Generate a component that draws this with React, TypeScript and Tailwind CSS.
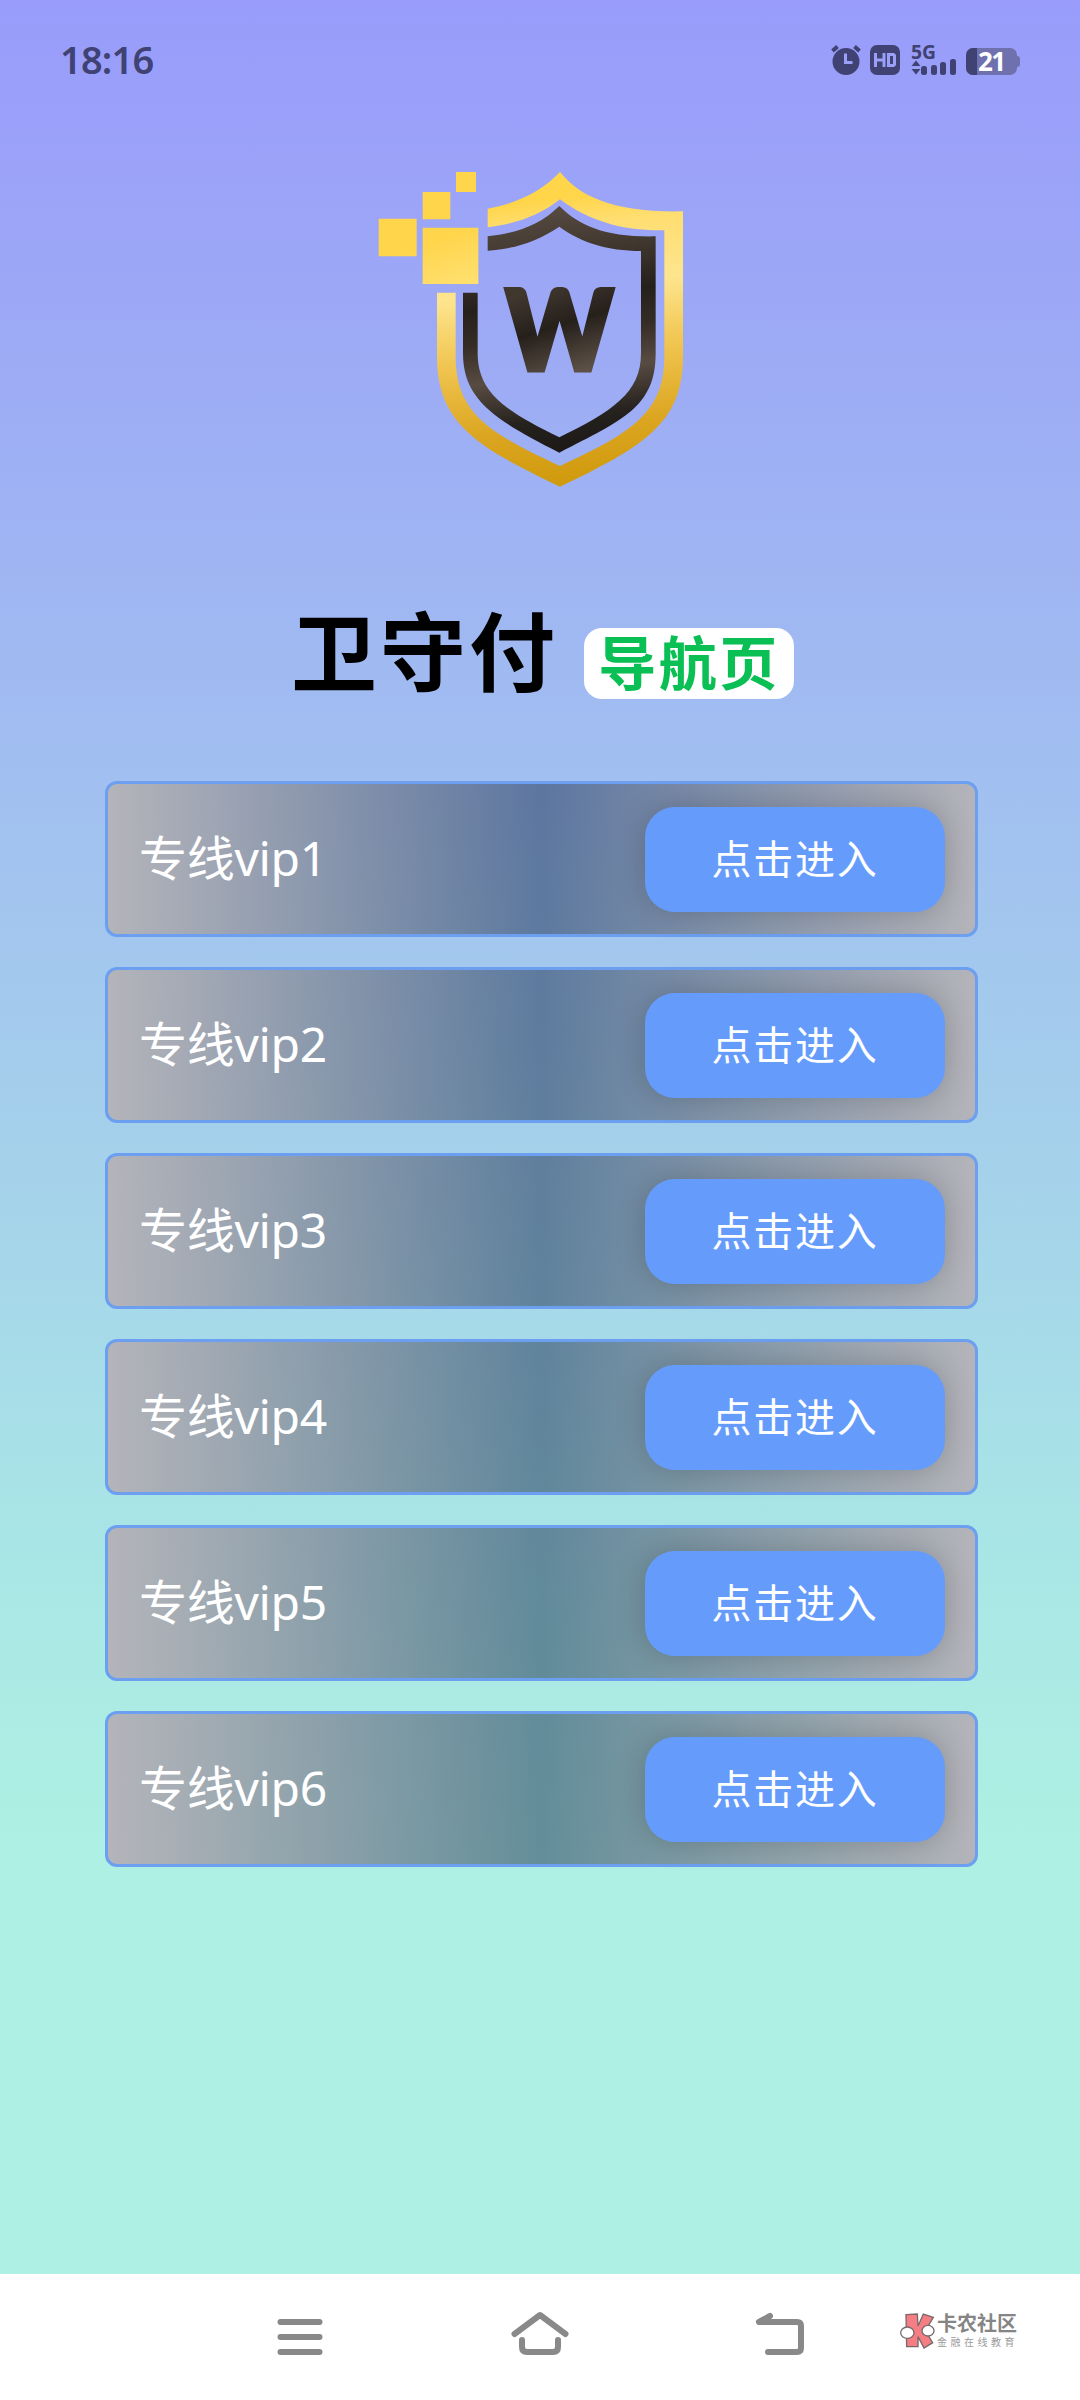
import * as React from 'react';

// ── Data ──────────────────────────────────────────────────────────────────────
const LINES = ['专线vip1', '专线vip2', '专线vip3', '专线vip4', '专线vip5', '专线vip6'];

// ── Status bar ────────────────────────────────────────────────────────────────
function StatusIcons() {
  return (
    <svg width="190" height="44" viewBox="830 38 190 44" fill="#3f4273">
      {/* alarm */}
      <circle cx="846" cy="61.500" r="13.500" />
      <path d="M832.500 51l5-4.500M859.500 51l-5-4.500" stroke="#3f4273" strokeWidth="4" />
      <path d="M845.500 53.500v9h7" fill="none" stroke="#9a9ff8" strokeWidth="3" />
      {/* HD */}
      <rect x="870" y="45" width="30" height="30" rx="7" />
      <path
        d="M875.500 53v14M884 53v14M875 60h9M888.500 54.500h5l1 1v9l-1 1h-5z"
        fill="none"
        stroke="#9a9ff8"
        strokeWidth="3"
      />
      {/* 5G + signal */}
      <text x="911" y="58.500" fontFamily="'Noto Sans', sans-serif" fontWeight="700" fontSize="19" textLength="25" lengthAdjust="spacingAndGlyphs">
        5G
      </text>
      <path d="M911.500 66l4.500-5.500 4.500 5.500zM911.500 69l4.500 5.500 4.500-5.500z" />
      <rect x="921" y="66" width="6" height="9" rx="2.500" />
      <rect x="931" y="65" width="6" height="10" rx="2.500" />
      <rect x="940" y="62" width="6" height="13" rx="2.500" />
      <rect x="950" y="59" width="6" height="16" rx="2.500" />
      {/* battery */}
      <rect x="966" y="48" width="51" height="27" rx="7" fill="#6e71ae" />
      <path d="M973 48h4v27h-4a7 7 0 0 1-7-7v-13a7 7 0 0 1 7-7z" />
      <path d="M1017 56a3 3 0 0 1 3 3v5a3 3 0 0 1-3 3z" fill="#6e71ae" />
      <text x="978" y="71" fontFamily="'Noto Sans', sans-serif" fontWeight="700" fontSize="26" fill="#fff" textLength="28">
        21
      </text>
    </svg>
  );
}

function StatusBar() {
  return (
    <header className="flex h-[120px] items-center justify-between pr-[60px] pl-[60px]">
      <span className="mb-[2px] font-['Noto_Sans'] text-[38px] leading-none font-semibold tracking-[-0.8px] text-[#3f4273]">
        18:16
      </span>
      <StatusIcons />
    </header>
  );
}

// ── Logo ──────────────────────────────────────────────────────────────────────
function Logo() {
  return (
    <svg width="340" height="350" viewBox="0 0 1020 1050">
      <defs>
        <linearGradient id="gold" gradientUnits="userSpaceOnUse" x1="500" y1="60" x2="600" y2="1010">
          <stop offset="0.100" stopColor="#ffd54a" />
          <stop offset="0.180" stopColor="#ffde70" />
          <stop offset="0.380" stopColor="#fde58e" />
          <stop offset="0.580" stopColor="#f1c652" />
          <stop offset="0.820" stopColor="#dba520" />
          <stop offset="1" stopColor="#cf9a0c" />
        </linearGradient>
        <linearGradient id="pixels" gradientUnits="userSpaceOnUse" x1="180" y1="60" x2="300" y2="402">
          <stop offset="0.600" stopColor="#ffd54c" />
          <stop offset="1" stopColor="#ffdf6e" />
        </linearGradient>
        <linearGradient id="dark" gradientUnits="userSpaceOnUse" x1="520" y1="170" x2="620" y2="910">
          <stop offset="0" stopColor="#584c42" />
          <stop offset="0.200" stopColor="#40372f" />
          <stop offset="0.380" stopColor="#26201b" />
          <stop offset="0.520" stopColor="#352c26" />
          <stop offset="0.680" stopColor="#584c42" />
          <stop offset="0.860" stopColor="#25211d" />
          <stop offset="1" stopColor="#1b1816" />
        </linearGradient>
        <linearGradient id="letter" gradientUnits="userSpaceOnUse" x1="560" y1="412" x2="640" y2="668">
          <stop offset="0" stopColor="#40372f" />
          <stop offset="0.450" stopColor="#26201b" />
          <stop offset="1" stopColor="#5c5046" />
        </linearGradient>
      </defs>
      <path
        fill="url(#pixels)"
        d="M288 66h60v60h-60zM188 126h83v82h-83zM56 206h114v113H56zM188 233h167v169H188z"
      />
      <path
        fill="url(#gold)"
        d="M383 176C470 160 545 125 600 66C660 140 760 188 969 184V620C969 820 850 890 600 1010C350 890 231 820 231 620V428H287V620C287 790 390 850 600 948C810 850 913 790 913 620V241C790 243 690 215 600 148C540 195 470 222 383 232Z"
      />
      <path
        fill="url(#dark)"
        d="M383 259C470 250 540 225 598 168C660 230 740 262 887 259V610C887 770 790 810 598 908C405 810 309 750 309 610V428H353V610C353 730 440 785 598 862C755 785 843 730 843 610V303C740 302 665 278 598 230C530 275 470 295 383 302Z"
      />
      <text
        x="437"
        y="661"
        fill="url(#letter)"
        stroke="url(#letter)"
        strokeWidth="15"
        fontFamily="Lato, sans-serif"
        fontWeight="900"
        fontSize="334"
        textLength="322"
        lengthAdjust="spacingAndGlyphs"
      >
        W
      </text>
    </svg>
  );
}

// ── List row ──────────────────────────────────────────────────────────────────
function LineRow({ label }: { label: string }) {
  return (
    <li className="flex h-[156px] items-center justify-between rounded-[12px] border-[3px] border-[#6c9ff0] bg-[linear-gradient(90deg,rgb(180,180,186)_0%,rgba(25,45,80,0.5)_50%,rgb(180,180,186)_100%)] pr-[30px] pl-[31px]">
      <span className="mb-[3px] font-['Noto_Sans','Noto_Sans_CJK_SC',sans-serif] text-[48px] leading-none tracking-[-0.3px] text-white">
        {label}
      </span>
      <button
        type="button"
        className="flex h-[105px] w-[300px] items-center justify-center rounded-[30px] bg-[#659cfb] pb-[5px] text-[40px] leading-none tracking-[1.8px] text-white shadow-[0_0_30px_rgba(0,0,0,0.2)]"
      >
        点击进入
      </button>
    </li>
  );
}

// ── Bottom navigation ─────────────────────────────────────────────────────────
function Watermark() {
  return (
    <div className="flex items-center">
      <svg width="36" height="38" viewBox="0 0 108 114">
        <path d="M18 8L52 6L54 42L70 6L100 16L76 56L98 92L72 108L54 74V104H20Z" fill="#f47e84" stroke="#77696c" strokeWidth="4" />
        <ellipse cx="22" cy="62" rx="20" ry="17" fill="#fff" stroke="#77696c" strokeWidth="4" />
        <ellipse cx="84" cy="56" rx="18" ry="16" fill="#fff" stroke="#77696c" strokeWidth="4" />
      </svg>
      <div className="mt-[-3px] ml-px">
        <p className="text-[20px] leading-[22px] font-bold text-[#858585]">卡农社区</p>
        <p className="mt-px text-[10px] leading-[13px] tracking-[3.500px] text-[#9b9b9b]">金融在线教育</p>
      </div>
    </div>
  );
}

function NavBar() {
  return (
    <nav className="relative flex h-[126px] items-center justify-center bg-white">
      <svg width="530" height="58" viewBox="275 2308 530 58" fill="none" stroke="#898989" strokeWidth="6" strokeLinecap="round" strokeLinejoin="round">
        <path d="M280.500 2322h39M280.500 2337h39M280.500 2352h39" />
        <path d="M514.500 2334l25.500-19 25.500 19M522 2340v7q0 5 5 5h26q5 0 5-5v-7" />
        <path d="M770 2316l-11 6h38q4 0 4 4v22q0 4-4 4h-29" />
      </svg>
      <div className="absolute top-[38px] left-[900px]">
        <Watermark />
      </div>
    </nav>
  );
}

// ── Page ──────────────────────────────────────────────────────────────────────
export default function App() {
  return (
    <div className="flex h-[2400px] w-[1080px] flex-col bg-[linear-gradient(180deg,#999cfb_0px,#9ca7f6_280px,#9fb5f3_560px,#a4cdec_1080px,#a9e8e5_1600px,#aef0e3_1850px,#aef0e3_2274px)] font-['Noto_Sans_CJK_SC',sans-serif]">
      <StatusBar />
      <main className="flex flex-1 flex-col">
        <div className="mt-[30px] ml-[360px]">
          <Logo />
        </div>
        <div className="mt-[93px] ml-[291px] flex h-[120px] items-center">
          <h1 className="mb-[11px] text-[86px] leading-none font-bold tracking-[3px] text-black">卫守付</h1>
          <span className="mt-[21px] ml-[26px] flex h-[71px] w-[210px] items-center justify-center rounded-[18px] bg-white pb-[7px] text-[58px] leading-none font-bold tracking-[2.5px] text-[#0abf53]">
            导航页
          </span>
        </div>
        <ul className="mt-[68px] ml-[105px] flex w-[873px] flex-col gap-[30px]">
          {LINES.map((label) => (
            <LineRow key={label} label={label} />
          ))}
        </ul>
      </main>
      <NavBar />
    </div>
  );
}
